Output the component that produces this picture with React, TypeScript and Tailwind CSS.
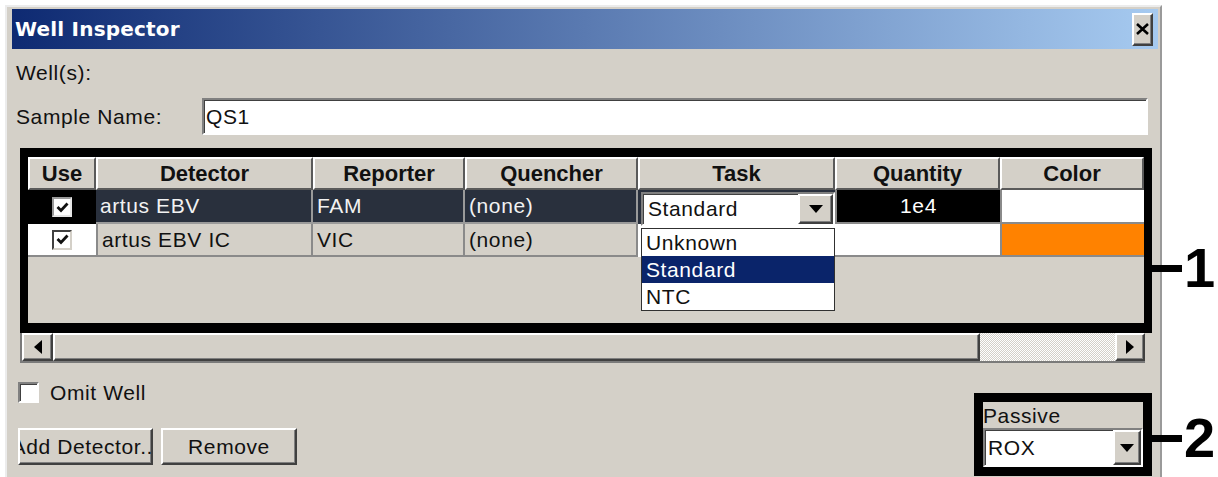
import React from "react";

const ui = "font-['Liberation_Sans',Arial,sans-serif]";
const raised =
  "border-2 border-t-white border-l-white border-r-[#404040] border-b-[#404040] shadow-[inset_-1px_-1px_0_#808080]";
const sunken =
  "border-2 border-t-[#808080] border-l-[#808080] border-r-white border-b-white shadow-[inset_1px_1px_0_#404040]";

function DownArrow() {
  return (
    <svg width="14" height="8" viewBox="0 0 14 8">
      <path d="M0 0h14L7 8z" fill="#000" />
    </svg>
  );
}

function CheckBox({ checked, light }: { checked?: boolean; light?: boolean }) {
  return (
    <span
      className={`flex h-[20px] w-[20px] shrink-0 items-center justify-center bg-white border-2 ${
        light
          ? "border-t-[#9a9a9a] border-l-[#9a9a9a] border-r-[#e6e6e6] border-b-[#e6e6e6]"
          : "border-t-[#404040] border-l-[#404040] border-r-[#d4d0c8] border-b-[#d4d0c8]"
      }`}
    >
      {checked && (
        <svg width="13" height="11" viewBox="0 0 13 11">
          <path d="M1.5 5 L5 8.5 L11.5 1.5" fill="none" stroke="#111" strokeWidth="2.8" />
        </svg>
      )}
    </span>
  );
}

function Callout({ n }: { n: string }) {
  return (
    <div className="flex items-center">
      <div className="h-[7px] w-[30px] bg-black" />
      <span className={`${ui} ml-[2px] text-[56px] font-bold leading-none text-black`}>{n}</span>
    </div>
  );
}

const headers = [
  { label: "Use", w: "w-[68px]" },
  { label: "Detector", w: "w-[217px]" },
  { label: "Reporter", w: "w-[152px]" },
  { label: "Quencher", w: "w-[173px]" },
  { label: "Task", w: "w-[197px]" },
  { label: "Quantity", w: "w-[165px]" },
  { label: "Color", w: "w-[144px]" },
];

const darkCell =
  "flex h-[34px] shrink-0 items-center bg-[#29303d] pl-[4px] text-[#f2f2f2] border-r-2 border-b-2 border-[#9a9a9a]";
const greyCell =
  "flex h-[33px] shrink-0 items-center bg-[#d4d0c8] pl-[4px] text-[#111] border-r-2 border-b-2 border-[#8a8a8a]";

export default function App() {
  return (
    <div className={`${ui} relative h-[477px] w-[1218px] overflow-hidden bg-white text-[21px] tracking-[0.6px] text-[#111]`}>
      {/* dialog window */}
      <div className="ml-[5px] mt-[5px] h-[480px] w-[1157px] border-l-2 border-t-2 border-r-2 border-l-[#ececec] border-t-[#ececec] border-r-[#9a9a9a] bg-[#d4d0c8] pl-[5px] pr-[2px] pt-[2px]">
        {/* title bar */}
        <div className="flex h-[40px] items-center justify-between bg-[linear-gradient(to_right,#0e2a72,#a6caf0)]">
          <span className="pl-[3px] font-['DejaVu_Sans',sans-serif] text-[20px] font-bold tracking-[0.2px] text-white">
            Well Inspector
          </span>
          <div className={`mr-[5px] flex h-[33px] w-[21px] items-center justify-center bg-[#d4d0c8] ${raised}`}>
            <svg width="13" height="12" viewBox="0 0 13 12">
              <path d="M1 1 L12 11 M12 1 L1 11" stroke="#000" strokeWidth="2.6" />
            </svg>
          </div>
        </div>

        <div className="ml-[4px] mt-[12px] h-[24px] leading-[24px]">Well(s):</div>

        <div className="mt-[13px] flex h-[37px] items-center">
          <span className="ml-[4px] w-[186px]">Sample Name:</span>
          <div className={`flex h-[37px] w-[946px] items-center bg-white pl-[2px] ${sunken}`}>QS1</div>
        </div>

        {/* detector grid */}
        <div className="relative ml-[8px] mt-[13px] w-[1132px]">
          <div className="h-[185px] border-x-[8px] border-t-[9px] border-b-[10px] border-black">
            <div className="relative flex h-full flex-col bg-[#d4d0c8]">
              <div className="flex">
                {headers.map((h) => (
                  <div
                    key={h.label}
                    className={`${h.w} flex h-[33px] shrink-0 items-center justify-center border-t-2 border-l-2 border-r-2 border-b-2 border-t-white border-l-white border-r-[#5a5a5a] border-b-[#5a5a5a] text-[22px] font-bold tracking-normal`}
                  >
                    {h.label}
                  </div>
                ))}
              </div>

              <div className="flex">
                <div className="flex h-[34px] w-[68px] shrink-0 items-center justify-center bg-black">
                  <CheckBox checked light />
                </div>
                <div className={`${darkCell} w-[217px]`}>artus EBV</div>
                <div className={`${darkCell} w-[152px]`}>FAM</div>
                <div className={`${darkCell} w-[173px]`}>(none)</div>
                <div className="relative z-10 h-[34px] w-[197px] shrink-0 bg-[#29303d] pl-[3px] pt-[2px]">
                  <div className={`flex h-[34px] items-center justify-between bg-white pl-[5px] ${sunken}`}>
                    <span>Standard</span>
                    <div className={`flex h-[30px] w-[35px] items-center justify-center bg-[#d4d0c8] ${raised}`}>
                      <DownArrow />
                    </div>
                  </div>
                </div>
                <div className="flex h-[34px] w-[165px] shrink-0 items-center justify-center border-l-2 border-b-2 border-[#8a8a8a] bg-black text-white">
                  1e4
                </div>
                <div className="h-[34px] w-[144px] shrink-0 border-l-2 border-b-2 border-[#8a8a8a] bg-white" />
              </div>

              <div className="flex">
                <div className="flex h-[33px] w-[68px] shrink-0 items-center justify-center border-b-2 border-[#8a8a8a] bg-white">
                  <CheckBox checked />
                </div>
                <div className={`${greyCell} w-[217px] border-l-2`}>artus EBV IC</div>
                <div className={`${greyCell} w-[152px]`}>VIC</div>
                <div className={`${greyCell} w-[173px]`}>(none)</div>
                <div className="h-[33px] w-[197px] shrink-0 bg-white" />
                <div className="h-[33px] w-[165px] shrink-0 border-b-2 border-[#8a8a8a] bg-white" />
                <div className="h-[33px] w-[144px] shrink-0 border-l-2 border-b-2 border-[#8a8a8a] bg-[#ff8200]" />
              </div>

              <div className="flex-1 bg-[#d4d0c8]" />

              {/* open task list */}
              <div className="absolute left-[613px] top-[71px] z-20 w-[194px] border border-[#303030] bg-white">
                <div className="flex h-[27px] items-center pl-[4px]">Unknown</div>
                <div className="flex h-[27px] items-center bg-[#0a246a] pl-[4px] text-white">Standard</div>
                <div className="flex h-[27px] items-center pl-[4px]">NTC</div>
              </div>
            </div>
          </div>
          <div className="absolute left-full top-[92px] z-30">
            <Callout n="1" />
          </div>
        </div>

        {/* horizontal scroll bar */}
        <div className="ml-[8px] flex h-[30px] w-[1125px] border-l-2 border-b-2 border-[#7a7a7a]">
          <div className={`flex w-[31px] items-center justify-center bg-[#d4d0c8] ${raised}`}>
            <svg width="8" height="14" viewBox="0 0 8 14">
              <path d="M8 0v14L0 7z" fill="#000" />
            </svg>
          </div>
          <div className={`w-[927px] bg-[#d4d0c8] ${raised}`} />
          <div className="w-[135px] bg-[repeating-conic-gradient(#ffffff_0_25%,#d4d0c8_0_50%)] bg-[length:2px_2px]" />
          <div className={`flex w-[30px] items-center justify-center bg-[#d4d0c8] ${raised}`}>
            <svg width="8" height="14" viewBox="0 0 8 14">
              <path d="M0 0v14L8 7z" fill="#000" />
            </svg>
          </div>
        </div>

        {/* bottom controls */}
        <div className="flex">
          <div className="ml-[6px] mt-[19px] flex flex-col">
            <div className="flex h-[21px] items-center">
              <span className={`h-[21px] w-[21px] bg-white ${sunken}`} />
              <span className="ml-[11px]">Omit Well</span>
            </div>
            <div className="mt-[25px] flex gap-[8px]">
              <div className={`flex h-[37px] w-[135px] items-center justify-center overflow-hidden bg-[#d4d0c8] ${raised}`}>
                <span className="shrink-0 whitespace-nowrap">Add Detector...</span>
              </div>
              <div className={`flex h-[37px] w-[136px] items-center justify-center bg-[#d4d0c8] ${raised}`}>
                Remove
              </div>
            </div>
          </div>

          <div className="relative ml-auto mr-[6px] mt-[30px]">
            <div className="h-[83px] w-[178px] border-[9px] border-black">
              <div className="flex h-[26px] items-center leading-none">Passive</div>
              <div className={`flex h-[39px] items-center justify-between bg-white pl-[3px] ${sunken}`}>
                <span>ROX</span>
                <div className={`flex h-[35px] w-[28px] items-center justify-center bg-[#d4d0c8] ${raised}`}>
                  <DownArrow />
                </div>
              </div>
            </div>
            <div className="absolute left-full top-[17px] z-30">
              <Callout n="2" />
            </div>
          </div>
        </div>
      </div>
    </div>
  );
}
